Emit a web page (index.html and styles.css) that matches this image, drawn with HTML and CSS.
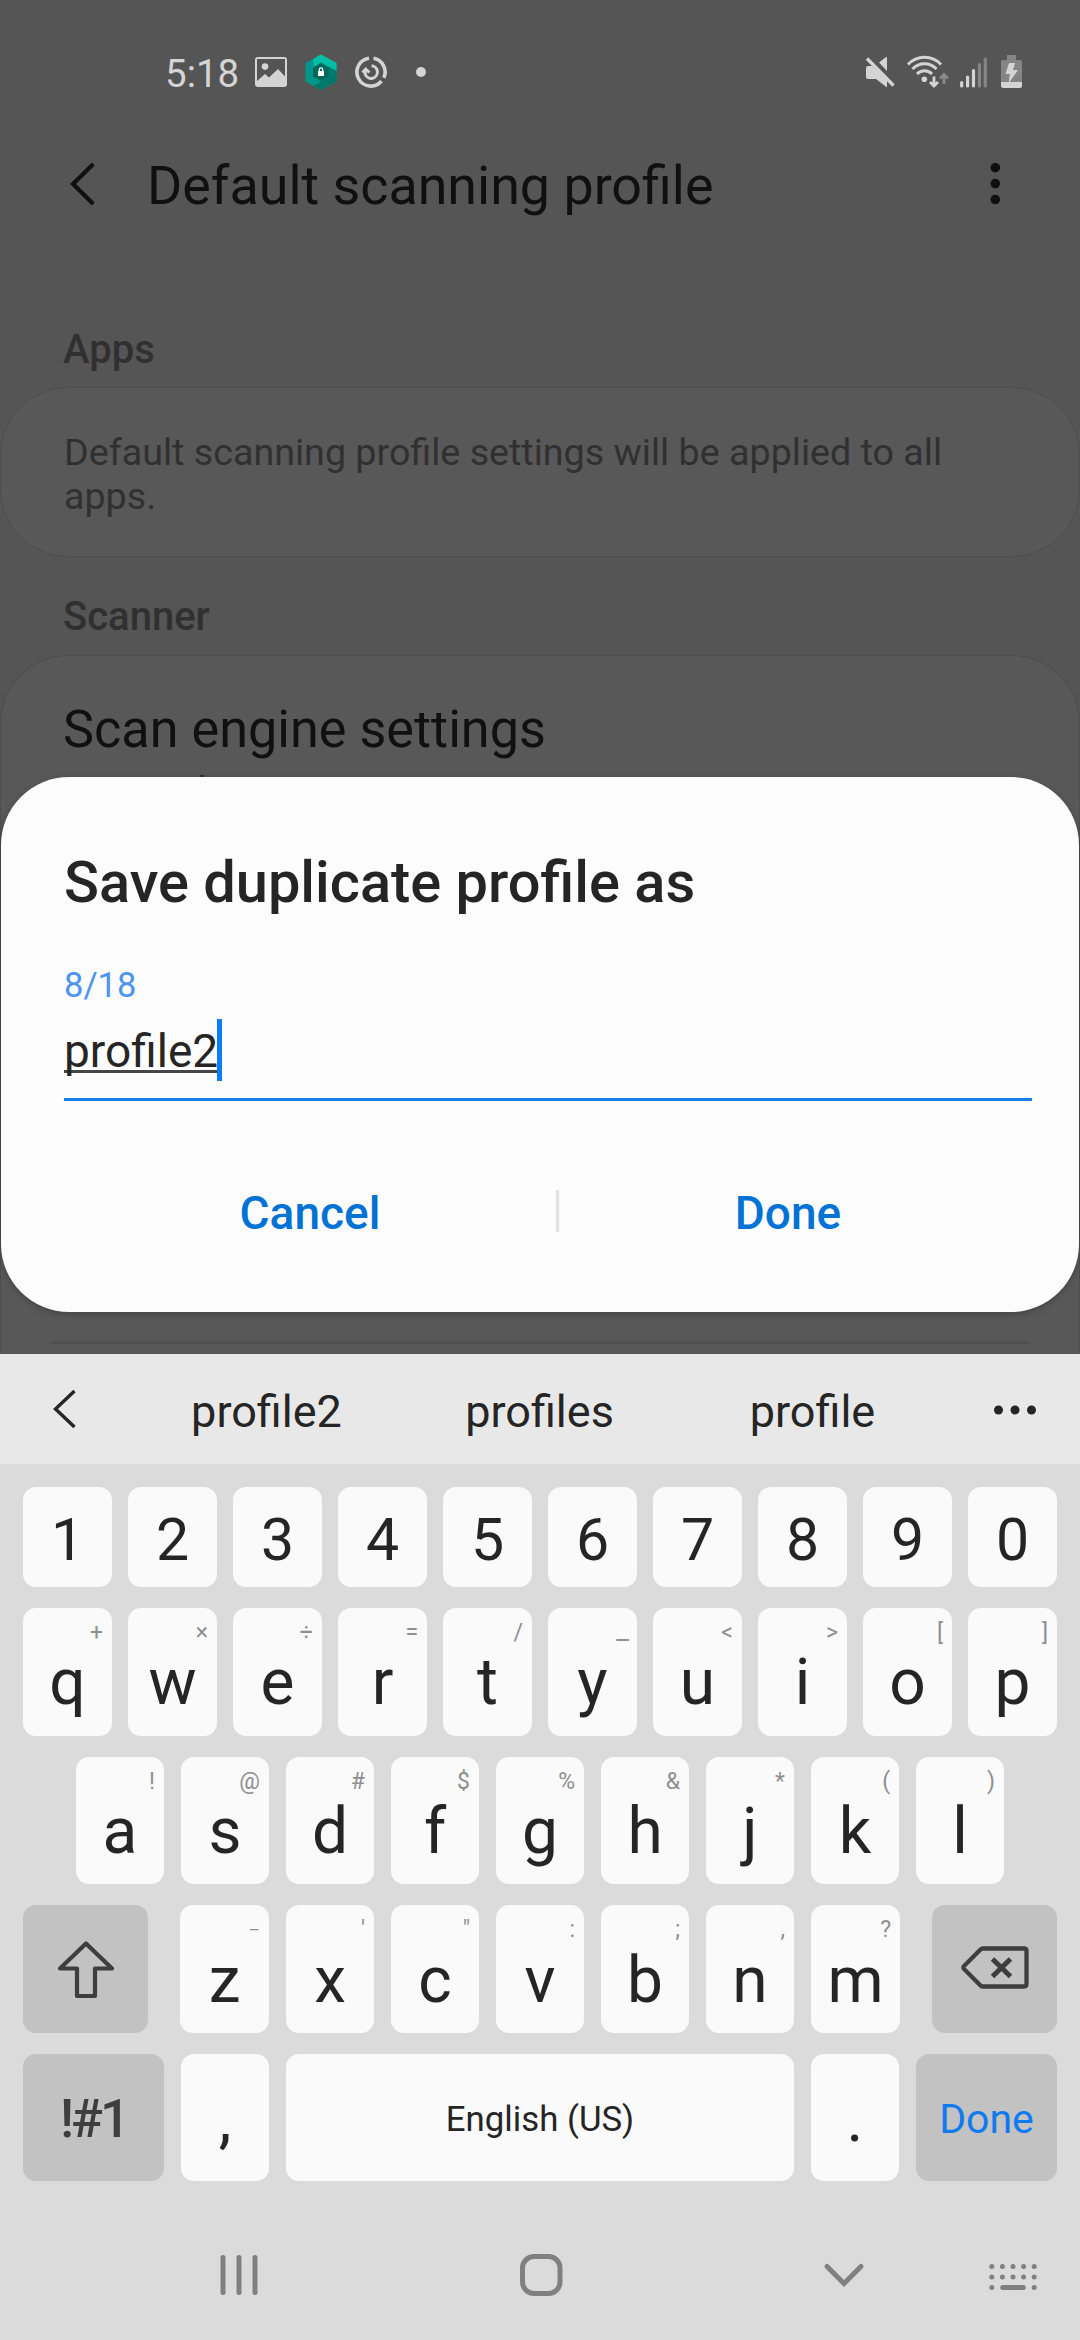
FILE: index.html
```html
<!DOCTYPE html>
<html lang="en">
<head>
<meta charset="utf-8">
<title>Default scanning profile</title>
<link rel="stylesheet" href="styles.css">
</head>
<body>
<div class="screen">
  <header class="status">
    <span class="time">5:18</span>
    <svg class="st-left" viewBox="250 50 180 44" width="180" height="44">
      <path fill="#d4d4d4" fill-rule="evenodd" d="M258 57h26a3 3 0 0 1 3 3v24a3 3 0 0 1-3 3h-26a3 3 0 0 1-3-3V60a3 3 0 0 1 3-3zm-1 2v22l8-7 4 3.500 9-8.500 7 7.500V59zM265 63.300a3.300 3.300 0 1 1 0 6.600a3.300 3.300 0 0 1 0-6.600z"/>
      <path fill="#00978a" d="M321 54.500l15.500 8.500v18.500L321 90l-15.500-8.500V63z"/>
      <path fill="#00bfa5" d="M321 54.500l15.500 8.500v8l-15.500-8.500-7.500 4.500v-8.300z"/>
      <path fill="#00796b" d="M336.500 71v10.500L321 90l-7-4 15-9.500V67z"/>
      <path fill="#00695c" d="M321 63l8 4.500v9l-8 4.500-8-4.500v-9z"/>
      <rect x="318" y="71" width="6" height="5" fill="#fff"/>
      <path fill="none" stroke="#fff" stroke-width="1.200" d="M319.300 71v-1.400a1.700 1.700 0 0 1 3.400 0V71"/>
      <g fill="none" stroke="#d4d4d4" stroke-width="3.600">
        <path d="M373.500 58.200A14 14 0 0 1 383.800 77.800"/>
        <path d="M381.500 81.200A14 14 0 1 1 369 58.200"/>
        <path d="M371.500 65.800A6.300 6.300 0 1 1 365.300 74.500V70" stroke-width="3"/>
        <path d="M362.500 72.500l3.200-3.500 3.800 3.500" stroke-width="2.800"/>
      </g>
      <circle cx="421" cy="72" r="5" fill="#d4d4d4"/>
    </svg>
    <svg class="st-right" viewBox="860 50 170 44" width="170" height="44">
      <path fill="#d4d4d4" d="M866 68a2 2 0 0 1 2-2h4l15 14v7.500l-11-8.500h-8a2 2 0 0 1-2-2zM879 62.500l7-5.500 1 .5v13.500z"/>
      <path stroke="#555" stroke-width="2.500" d="M869 56l27 28"/>
      <path stroke="#d4d4d4" stroke-width="3.300" d="M867 58.500l26.500 27"/>
      <g fill="none" stroke="#d4d4d4" stroke-width="3">
        <path d="M908 64.500A22.500 22.500 0 0 1 941 64.500"/>
        <path d="M912.500 69A16.500 16.500 0 0 1 936.500 69"/>
        <path d="M917 74A10.500 10.500 0 0 1 932 74"/>
        <path d="M934 76.500v9M930 82l4 4 4-4" stroke-width="2.800"/>
        <path d="M944 84v-9M940 78.500l4-4 4 4" stroke="#8a8a8a" stroke-width="2.800"/>
      </g>
      <circle cx="924.300" cy="79.300" r="2.800" fill="#d4d4d4"/>
      <g stroke="#d4d4d4" stroke-width="3.200" stroke-linecap="round">
        <path d="M961.700 82.500v3.500M967.600 77v9M973.500 70.500v15.500"/>
        <path stroke="#858585" d="M979.400 64.500v21.500M985.300 59v27"/>
      </g>
      <path fill="#858585" d="M1007 55h9v5h4a2 2 0 0 1 2 2v20h-21V62a2 2 0 0 1 2-2h4z"/>
      <path fill="#d4d4d4" d="M1001 82h21v4a2 2 0 0 1-2 2h-17a2 2 0 0 1-2-2zM1009 63h6l-2 7h5l-9.500 13.500 1.500-9.500h-4.500z"/>
    </svg>
  </header>
  <div class="appbar">
    <svg class="back" viewBox="66 160 32 48" width="32" height="48"><path d="M93.300 164L73 184L93.300 204" fill="none" stroke="#101010" stroke-width="4.200"/></svg>
    <h1>Default scanning profile</h1>
    <svg class="more" viewBox="985 160 20 48" width="20" height="48" fill="#101010"><circle cx="995.300" cy="167.700" r="4.800"/><circle cx="995.300" cy="183.600" r="4.800"/><circle cx="995.300" cy="199.500" r="4.800"/></svg>
  </div>
  <main>
    <h2 class="apps">Apps</h2>
    <section class="card note">Default scanning profile settings will be applied to all apps.</section>
    <h2 class="scanner">Scanner</h2>
    <section class="card engine">
      <div class="item">Scan engine settings</div>
      <div class="sub">Tap to change scan engine settings</div>
      <hr>
    </section>
  </main>

  <div class="dialog">
    <h3>Save duplicate profile as</h3>
    <div class="count">8/18</div>
    <div class="field"><span class="value">profile2</span><i class="caret"></i></div>
    <div class="actions"><b>Cancel</b><i></i><b>Done</b></div>
  </div>

  <div class="keyboard">
    <div class="suggest">
      <svg viewBox="50 1386 30 46" width="30" height="46"><path d="M74.500 1391L55.500 1409L74.500 1427" fill="none" stroke="#252525" stroke-width="3.400"/></svg>
      <div class="words"><span>profile2</span><span>profiles</span><span>profile</span></div>
      <svg viewBox="990 1399 50 20" width="50" height="20" fill="#252525"><circle cx="998.500" cy="1410" r="4.500"/><circle cx="1015" cy="1410" r="4.500"/><circle cx="1031.500" cy="1410" r="4.500"/></svg>
    </div>
    <div class="keys">
      <div class="row digits"><div class="key">1</div><div class="key">2</div><div class="key">3</div><div class="key">4</div><div class="key">5</div><div class="key">6</div><div class="key">7</div><div class="key">8</div><div class="key">9</div><div class="key">0</div></div>
      <div class="row r2"><div class="key"><small>+</small>q</div><div class="key"><small>×</small>w</div><div class="key"><small>÷</small>e</div><div class="key"><small>=</small>r</div><div class="key"><small>/</small>t</div><div class="key"><small class="under">_</small>y</div><div class="key"><small>&lt;</small>u</div><div class="key"><small>&gt;</small>i</div><div class="key"><small>[</small>o</div><div class="key"><small>]</small>p</div></div>
      <div class="row r3"><div class="key"><small>!</small>a</div><div class="key"><small>@</small>s</div><div class="key"><small>#</small>d</div><div class="key"><small>$</small>f</div><div class="key"><small>%</small>g</div><div class="key"><small>&amp;</small>h</div><div class="key"><small>*</small>j</div><div class="key"><small>(</small>k</div><div class="key"><small>)</small>l</div></div>
      <div class="row r4">
        <div class="key fn"><svg viewBox="50.500 1934 70 70" width="70" height="70"><path d="M85.500 1943.500L111.500 1968.500H94.500V1996H76.500V1968.500H59.500Z" fill="none" stroke="#3e3e3e" stroke-width="4.200" stroke-linejoin="round"/></svg></div>
        <div class="key"><small class="dash">–</small>z</div><div class="key"><small>'</small>x</div><div class="key"><small>"</small>c</div><div class="key"><small>:</small>v</div><div class="key"><small>;</small>b</div><div class="key"><small>,</small>n</div><div class="key"><small>?</small>m</div>
        <div class="key fn"><svg viewBox="954.500 1934 80 70" width="80" height="70"><path d="M982 1948.500H1023.500Q1026 1948.500 1026 1951V1984Q1026 1986.500 1023.500 1986.500H982Q981 1986.500 980 1985.500L963.500 1969Q962.500 1967.500 963.500 1966L980 1949.500Q981 1948.500 982 1948.500Z" fill="none" stroke="#3e3e3e" stroke-width="4.300"/><path d="M992 1959L1010 1976.500M1010 1959L992 1976.500" stroke="#3e3e3e" stroke-width="5"/></svg></div>
      </div>
      <div class="row r5"><div class="key fn sym">!#1</div><div class="key">,</div><div class="key space">English (US)</div><div class="key">.</div><div class="key fn done">Done</div></div>
    </div>
    <nav>
      <svg viewBox="0 2240 1080 70" width="1080" height="70" fill="none" stroke="#808080" stroke-width="5" stroke-linecap="round">
        <path d="M223 2257.500v35M239 2257.500v35M255 2257.500v35"/>
        <rect x="522.500" y="2256.500" width="37.500" height="37" rx="11.500"/>
        <path d="M827 2266.500L844 2283.500L861 2266.500"/>
        <path d="M991.800 2266.500h.01M1002.400 2266.500h.01M1013 2266.500h.01M1023.600 2266.500h.01M1034.200 2266.500h.01M991.800 2277h.01M1002.400 2277h.01M1013 2277h.01M1023.600 2277h.01M1034.200 2277h.01M991.800 2287.500h.01M1002.700 2287.500h20.600M1034.200 2287.500h.01"/>
      </svg>
    </nav>
  </div>
</div>
</body>
</html>
```
FILE: styles.css
```css
* { box-sizing: border-box; }
body { margin: 0; font-family: Roboto, "Liberation Sans", sans-serif; color: #252525; }
h1, h2, h3 { margin: 0; font-weight: 500; white-space: nowrap; }
svg { display: block; flex: none; }
.screen { position: relative; width: 1080px; height: 2340px; background: #555; overflow: hidden; }

.status { display: flex; align-items: center; height: 144px; padding-left: 165px; }
.time { width: 85px; font-size: 38.500px; line-height: 46px; color: #d4d4d4; margin-top: 3px; }
.st-right { margin-left: 430px; }

.appbar { display: flex; align-items: center; height: 80px; padding-left: 66px; }
.appbar h1 { width: 840px; margin-left: 49px; font-size: 53.800px; font-weight: 400; line-height: 64px; color: #101010; padding-top: 4px; }
.more { margin-left: -2px; }

main h2 { padding-left: 63px; font-size: 40px; line-height: 46px; color: #303030; }
.apps { margin-top: 103px; height: 60px; }
.card { border: 1px solid #4d4d4d; border-radius: 68px; background: #585858; }
.note { height: 170px; padding: 42px 63px; font-size: 37.650px; line-height: 44px; color: #303030; }
.scanner { height: 98px; padding-top: 37px; }
.engine { height: 800px; padding: 44px 50px; }
.item { padding-left: 12px; font-size: 52.200px; line-height: 59px; height: 60px; color: #101010; }
.sub { padding-left: 13px; font-size: 37.650px; line-height: 44px; color: #303030; margin-top: 8px; }
.engine hr { height: 3px; margin: 529px 0 0; border: 0; background: #505050; }

.dialog { position: absolute; left: 1px; top: 777px; width: 1078px; height: 535px; padding: 72px 47px 0 63px; border-radius: 68px; background: #fcfcfc; box-shadow: 0 2px 6px rgba(0,0,0,.25); }
.dialog h3 { font-size: 57.750px; line-height: 66px; height: 106px; }
.count { height: 64px; font-size: 34.500px; line-height: 60px; color: #4d94ee; }
.field { display: flex; height: 82px; align-items: flex-start; border-bottom: 3.500px solid #1580ea; }
.value { height: 54px; line-height: 64px; font-size: 46px; border-bottom: 3px solid #454545; }
.caret { width: 5px; height: 62px; margin-left: -1px; background: #0a7ff5; }
.actions { display: grid; grid-template-columns: 492px 3px 458px; margin-top: 77px; align-items: center; }
.actions b { text-align: center; font-size: 46px; line-height: 70px; font-weight: 500; color: #0372d5; }
.actions i { height: 42px; margin-bottom: 4px; background: #e2e2e2; }

.keyboard { position: absolute; left: 0; top: 1354px; width: 1080px; height: 986px; background: #dbdbdb; }
.suggest { display: flex; align-items: center; justify-content: space-between; height: 110px; padding: 0 40px 0 50px; background: #e8e8e8; font-size: 45px; }
.words { display: grid; grid-template-columns: repeat(3, 273px); width: 819px; margin-right: -9px; }
.words span { text-align: center; padding-top: 4px; }
.keys { display: flex; flex-direction: column; gap: 21px; padding: 23px 23px 0; }
.row { display: flex; gap: 17px; }
.key { position: relative; display: flex; flex: none; justify-content: center; width: 88px; height: 127px; border-radius: 13px; background: #fafafa; font-size: 64px; line-height: 150px; }
.key small { position: absolute; right: 9px; top: 11px; font-size: 23px; line-height: 28px; color: #8f8f8f; }
.key small.dash { font-size: 17px; }
.key small.under { font-size: 28px; right: 8px; top: 8px; }
.digits, .r2 { gap: 16px; }
.digits .key { width: 89px; height: 100px; font-size: 59px; line-height: 106px; }
.r2 .key { width: 89px; height: 128px; }
.r3 { padding-left: 53px; }
.r4 .key { height: 128px; line-height: 151px; }
.r4 .key:nth-child(2), .r4 .key:nth-child(8) { width: 89px; }
.key.fn { background: #c2c2c2; align-items: center; }
.r4 .fn { width: 125px; }
.r4 .fn:first-child { margin-right: 15px; }
.r4 .fn:last-child { margin-left: 15px; }
.r5 .key { line-height: 132px; }
.r5 .fn { width: 141px; }
.r5 .sym { font-size: 53px; font-weight: 500; line-height: 60px; color: #3e3e3e; letter-spacing: -3px; padding: 3px 0 0; }
.r5 .space { width: 508px; font-size: 34.800px; line-height: 130px; }
.r5 .done { font-size: 41px; line-height: 50px; color: #107aef; padding-top: 2px; }
nav { margin-top: 59px; }
```
